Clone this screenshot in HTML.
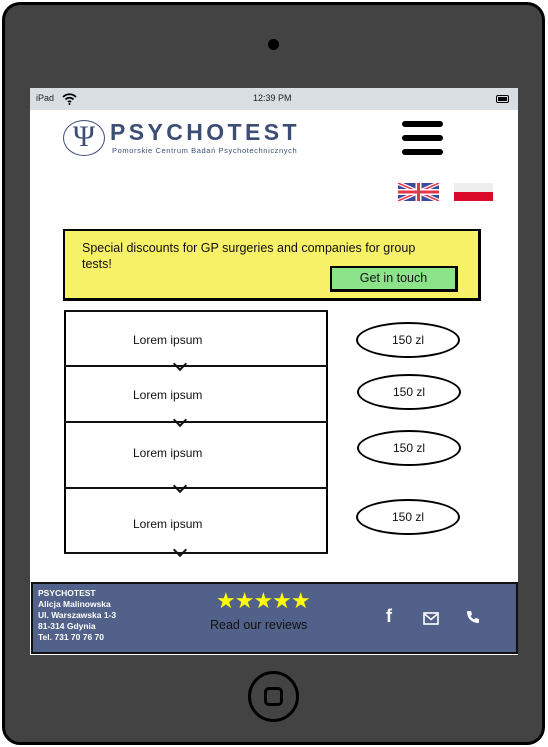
<!DOCTYPE html>
<html><head><meta charset="utf-8"><style>
*{margin:0;padding:0;box-sizing:border-box}
body{width:548px;height:747px;background:#fff;position:relative;overflow:hidden;font-family:"Liberation Sans",sans-serif}
.a{position:absolute}
.frame{left:2px;top:2px;width:543px;height:743px;background:#434343;border:3px solid #000;border-radius:18px}
.screen{left:30px;top:88px;width:488px;height:567px;background:#fff}
.sb{left:30px;top:88px;width:488px;height:22px;background:#d8dee1;font-size:9px;color:#222}
.acc{left:64px;width:264px;border-left:2px solid #000;border-right:2px solid #000}
.hl{left:64px;width:264px;height:2px;background:#111}
.lbl{font-size:12px;color:#111;width:264px;left:64px;padding-left:69px}
.chev{width:10px;height:10px;border-right:2px solid #111;border-bottom:2px solid #111;transform:rotate(45deg)}
.pill{width:104px;height:36px;border:2px solid #000;border-radius:50%;font-size:12px;text-align:center;line-height:32px;color:#111;background:#fff}
.ft{color:#fff;font-size:8.5px;font-weight:bold;line-height:11px}
</style></head><body>
<div class="a frame"></div>
<div class="a" style="left:268px;top:39px;width:11px;height:11px;border-radius:50%;background:#000"></div>
<div class="a" style="left:248px;top:671px;width:51px;height:51px;border-radius:50%;border:3px solid #000"></div>
<div class="a" style="left:264px;top:687px;width:19px;height:19px;border-radius:5px;border:3px solid #000"></div>
<div class="a screen"></div>
<div class="a sb"><span class="a" style="left:6px;top:5px">iPad</span>
<svg class="a" style="left:32px;top:5px" width="15" height="12" viewBox="0 0 15 12"><path d="M1 4a9 9 0 0 1 13 0M3.5 6.5a5.5 5.5 0 0 1 8 0M6 9a2 2 0 0 1 3 0" stroke="#000" stroke-width="1.8" fill="none"/><circle cx="7.5" cy="11" r="1" fill="#000"/></svg>
<span class="a" style="left:223px;top:5px">12:39 PM</span>
<div class="a" style="left:466px;top:7px;width:13px;height:8px;border:1.5px solid #000;border-radius:2px;padding:1px"><div style="width:100%;height:100%;background:#000"></div></div></div>
<!-- logo -->
<div class="a" style="left:63px;top:120px;width:42px;height:36px;border:1.5px solid #3d4e76;border-radius:50%;color:#3d4e76;font-family:'Liberation Serif',serif;font-size:30px;text-align:center;line-height:32px">Ψ</div>
<div class="a" style="left:110px;top:119px;color:#3d4e76;font-size:23px;font-weight:bold;letter-spacing:3.4px">PSYCHOTEST</div>
<div class="a" style="left:112px;top:146px;color:#3d4e76;font-size:7.5px;letter-spacing:0.6px">Pomorskie Centrum Badań Psychotechnicznych</div>
<div class="a" style="left:402px;top:121px;width:41px;height:6px;background:#000;border-radius:3px"></div>
<div class="a" style="left:402px;top:135px;width:41px;height:6px;background:#000;border-radius:3px"></div>
<div class="a" style="left:402px;top:149px;width:41px;height:6px;background:#000;border-radius:3px"></div>
<svg class="a" style="left:398px;top:183px" width="41" height="18" viewBox="0 0 41 18"><rect width="41" height="18" fill="#3b4a9b"/><path d="M0 0L41 18M41 0L0 18" stroke="#fff" stroke-width="4"/><path d="M0 0L41 18M41 0L0 18" stroke="#e5354b" stroke-width="1.5"/><path d="M20.5 0V18M0 9H41" stroke="#fff" stroke-width="6"/><path d="M20.5 0V18M0 9H41" stroke="#e5354b" stroke-width="3"/></svg>
<div class="a" style="left:454px;top:183px;width:39px;height:9px;background:#eee"></div>
<div class="a" style="left:454px;top:192px;width:39px;height:9px;background:#dc0a2a"></div>
<!-- yellow -->
<div class="a" style="left:63px;top:229px;width:418px;height:72px;background:#f6f167;border:2px solid #000;border-right-width:3px;border-bottom-width:3px"></div>
<div class="a" style="left:82px;top:240px;width:340px;font-size:12.5px;line-height:16px;color:#111">Special discounts for GP surgeries and companies for group tests!</div>
<div class="a" style="left:330px;top:266px;width:128px;height:26px;background:#8de38a;border:2px solid #000;border-right-width:3px;border-bottom-width:3px;font-size:12.5px;text-align:center;line-height:21px;color:#111">Get in touch</div>
<!-- accordion -->
<div class="a acc" style="top:310px;height:244px"></div>
<div class="a hl" style="top:310px"></div>
<div class="a hl" style="top:365px"></div>
<div class="a hl" style="top:421px"></div>
<div class="a hl" style="top:487px"></div>
<div class="a hl" style="top:552px"></div>
<div class="a lbl" style="top:333px">Lorem ipsum</div>
<div class="a lbl" style="top:388px">Lorem ipsum</div>
<div class="a lbl" style="top:446px">Lorem ipsum</div>
<div class="a lbl" style="top:517px">Lorem ipsum</div>
<div class="a chev" style="left:175px;top:359px"></div>
<div class="a chev" style="left:175px;top:415px"></div>
<div class="a chev" style="left:175px;top:481px"></div>
<div class="a chev" style="left:175px;top:545px"></div>
<div class="a pill" style="left:356px;top:322px">150 zl</div>
<div class="a pill" style="left:357px;top:374px">150 zl</div>
<div class="a pill" style="left:357px;top:430px">150 zl</div>
<div class="a pill" style="left:356px;top:499px">150 zl</div>
<!-- footer -->
<div class="a" style="left:31px;top:582px;width:487px;height:72px;background:#52618a;border:2px solid #111"></div>
<div class="a ft" style="left:38px;top:588px">PSYCHOTEST<br>Alicja Malinowska<br>Ul. Warszawska 1-3<br>81-314 Gdynia<br>Tel. 731 70 76 70</div>
<div class="a" style="left:216px;top:589px;color:#ffff00;font-size:22px;letter-spacing:-1px;line-height:24px">★★★★★</div>
<div class="a" style="left:210px;top:618px;font-size:12.5px;color:#111">Read our reviews</div>
<div class="a" style="left:386px;top:606px;color:#fff;font-size:18px;font-weight:bold">f</div>
<svg class="a" style="left:423px;top:612px" width="16" height="13" viewBox="0 0 16 13"><rect x="1" y="1" width="14" height="11" fill="none" stroke="#fff" stroke-width="1.6"/><path d="M1 1.5L8 7.5L15 1.5" fill="none" stroke="#fff" stroke-width="1.6"/></svg>
<svg class="a" style="left:466px;top:610px" width="14" height="14" viewBox="0 0 14 14"><path d="M2 1L5 1L6 4.5L4.5 6A8 8 0 0 0 8 9.5L9.5 8L13 9L13 12C13 12.5 12.5 13 12 13A11 11 0 0 1 1 2C1 1.5 1.5 1 2 1Z" fill="#fff"/></svg>
</body></html>
